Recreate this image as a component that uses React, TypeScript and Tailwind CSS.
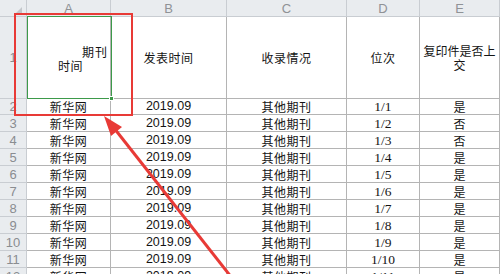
import React from 'react';

const cols = 'grid grid-cols-[27px_84px_116px_120px_73px_80px]';

const rows = [
  { n: 2, d: '1/1', e: '是', h: 'h-[16px]' },
  { n: 3, d: '1/2', e: '否', h: 'h-[17px]' },
  { n: 4, d: '1/3', e: '否', h: 'h-[17px]' },
  { n: 5, d: '1/4', e: '是', h: 'h-[17px]' },
  { n: 6, d: '1/5', e: '是', h: 'h-[17px]' },
  { n: 7, d: '1/6', e: '是', h: 'h-[17px]' },
  { n: 8, d: '1/7', e: '是', h: 'h-[17px]' },
  { n: 9, d: '1/8', e: '是', h: 'h-[17px]' },
  { n: 10, d: '1/9', e: '是', h: 'h-[17px]' },
  { n: 11, d: '1/10', e: '是', h: 'h-[17px]' },
  { n: 12, d: '1/11', e: '是', h: 'h-[17px]' },
];

const cell = 'flex items-center justify-center border-r border-b border-[#b4b4b4] overflow-hidden whitespace-nowrap';
const rowHead = 'flex items-center justify-center border-r border-b border-[#c9cdd2] bg-[#e9ecef] text-[#8a8d91] text-[13px]';

const App: React.FC = () => {
  return (
    <div className="relative w-[500px] h-[274px] overflow-hidden bg-white text-[#141414] font-['Noto_Sans_CJK_SC',sans-serif]">
      {/* column letters */}
      <div className={`${cols} h-[17px] bg-[#e9ecef] text-[#8f9296] text-[13px] font-['Liberation_Sans',sans-serif]`}>
        <div className="border-r border-b border-[#c9cdd2] flex items-end justify-end pr-[4px] pb-[2px]">
          <div className="w-0 h-0 border-l-[7px] border-l-transparent border-b-[7px] border-b-[#c4c7cb]" />
        </div>
        {['A', 'B', 'C', 'D', 'E'].map((l) => (
          <div key={l} className="flex items-center justify-center border-r border-b border-[#c9cdd2] leading-none">
            {l}
          </div>
        ))}
      </div>

      {/* header row */}
      <div className={`${cols} h-[82px] text-[12px] tracking-[0.5px]`}>
        <div className={`${rowHead} font-['Liberation_Sans',sans-serif] tracking-normal`}>1</div>
        <div className="flex flex-col justify-center border-r border-b border-[#b4b4b4] leading-[14px] pt-[2px]">
          <div className="self-end pr-[2px] tracking-[1px]">期刊</div>
          <div className="pl-[31px]">时间</div>
        </div>
        <div className={cell}>发表时间</div>
        <div className={cell}>收录情况</div>
        <div className={cell}>位次</div>
        <div className="flex flex-col items-center justify-center border-r border-b border-[#b4b4b4] leading-[14px] whitespace-nowrap overflow-hidden tracking-normal">
          <div>复印件是否上</div>
          <div>交</div>
        </div>
      </div>

      {rows.map((r) => (
        <div key={r.n} className={`${cols} ${r.h} text-[12px] leading-[15px]`}>
          <div className={`${rowHead} font-['Liberation_Sans',sans-serif]`}>{r.n}</div>
          <div className={`${cell} tracking-[0.5px]`}>新华网</div>
          <div className={`${cell} font-['Liberation_Sans',sans-serif] text-[12.5px]`}>2019.09</div>
          <div className={`${cell} tracking-[0.5px]`}>其他期刊</div>
          <div className={`${cell} font-['Liberation_Serif',serif] text-[13.5px]`}>{r.d}</div>
          <div className={cell}>{r.e}</div>
        </div>
      ))}

      {/* selection and annotation overlays */}
      <div className="absolute left-[27px] top-[16px] w-[85px] h-[83px] border border-[#3d9a4a]" />
      <div className="absolute left-[109px] top-[96px] w-[5px] h-[5px] bg-[#3d9a4a] border border-white" />
      <div className="absolute left-[14px] top-[13px] w-[119px] h-[103px] border-2 border-[#e83a36]" />
      <svg className="absolute left-0 top-0" width="500" height="274" viewBox="0 0 500 274">
        <line x1="114" y1="128" x2="232" y2="278" stroke="#e83a36" strokeWidth="3" />
        <polygon points="104,116 111,136 122,127" fill="#e83a36" />
      </svg>
    </div>
  );
};

export default App;
